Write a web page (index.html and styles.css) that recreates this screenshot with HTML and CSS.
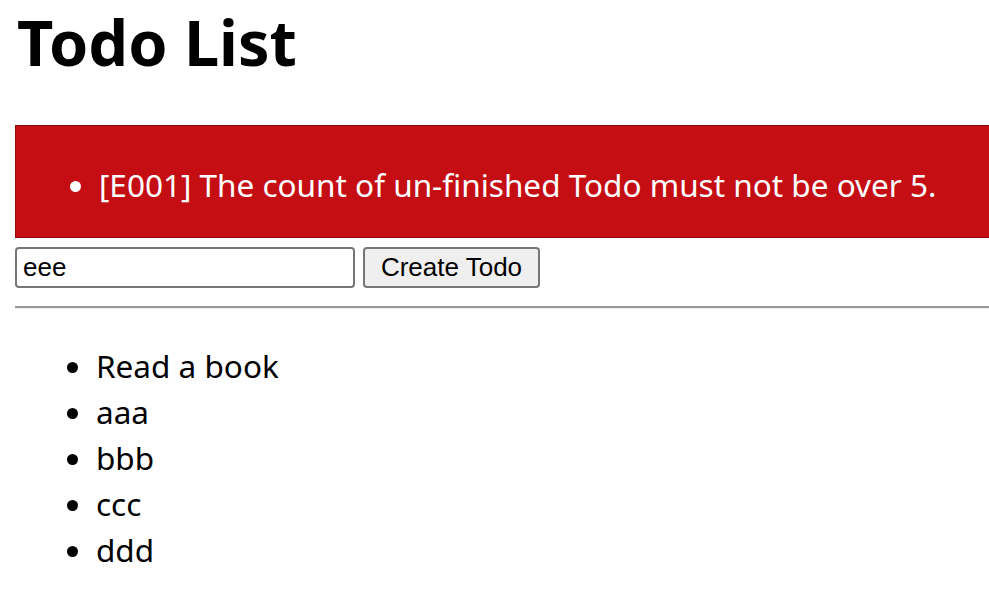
FILE: index.html
```html
<!DOCTYPE html>
<html>
<head>
<meta charset="utf-8">
<link rel="stylesheet" href="styles.css">
</head>
<body>
<div class="page">
  <h1 class="title">Todo List</h1>
  <div class="error-box">
    <ul class="error-list">
      <li>[E001] The count of un-finished Todo must not be over 5.</li>
    </ul>
  </div>
  <form class="todo-form">
    <input class="todo-input" type="text" value="eee">
    <button class="todo-button" type="button">Create Todo</button>
  </form>
  <hr class="divider">
  <ul class="todo-list">
    <li>Read a book</li>
    <li>aaa</li>
    <li>bbb</li>
    <li>ccc</li>
    <li>ddd</li>
  </ul>
</div>
</body>
</html>
```
FILE: styles.css
```css
html, body {
  margin: 0;
  padding: 0;
  background: #fff;
  overflow: hidden;
}
.page {
  padding-left: 15px;
  font-family: "Noto Sans", sans-serif;
  color: #000;
}
.title {
  margin: 0;
  font-size: 63px;
  font-weight: 700;
  line-height: 84px;
  height: 125px;
  padding-left: 2px;
}
.error-box {
  background: #c40e13;
  border: 1px solid #8f0a0d;
  border-right: 0;
  height: 111px;
  display: flex;
  align-items: center;
}
.error-list {
  margin: 6px 0 0 0;
  padding-left: 83px;
  color: #fff;
  font-size: 31.5px;
}
.todo-form {
  display: flex;
  gap: 8px;
  margin-top: 9px;
}
.todo-input {
  box-sizing: border-box;
  width: 340px;
  height: 41px;
  border: 2px solid #767676;
  border-radius: 4px;
  padding: 0 6px;
  font-family: "Liberation Sans", Arial, sans-serif;
  font-size: 26px;
  color: #000;
}
.todo-button {
  box-sizing: border-box;
  width: 177px;
  height: 41px;
  border: 2px solid #767676;
  border-radius: 4px;
  background: #efefef;
  font-family: "Liberation Sans", Arial, sans-serif;
  font-size: 26px;
  color: #000;
  padding: 0;
}
.divider {
  margin: 18px 0 0 0;
  border: 0;
  border-top: 2px solid #9a9a9a;
  border-bottom: 1px solid #eee;
  height: 0;
}
.todo-list {
  margin: 34px 0 0 0;
  padding-left: 81px;
  font-size: 31.5px;
  line-height: 46px;
}
```
